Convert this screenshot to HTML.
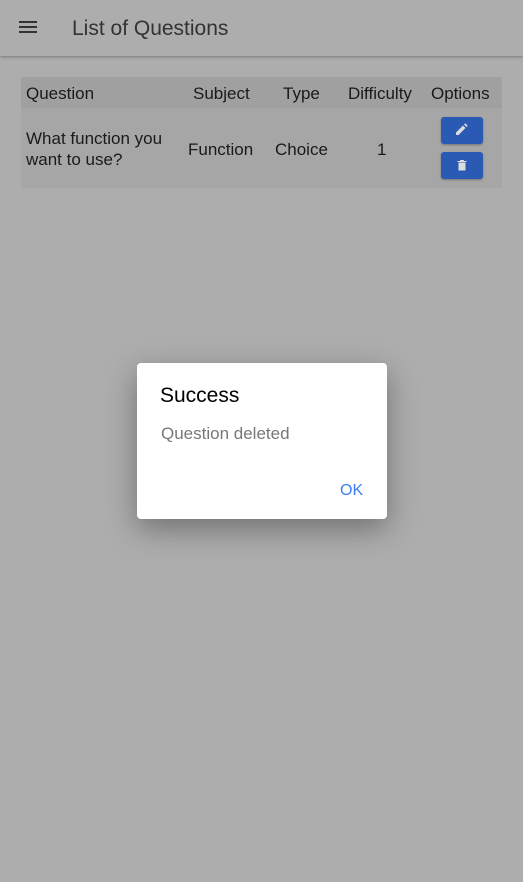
<!DOCTYPE html>
<html><head><style>
body{margin:0;width:523px;height:882px;background:#adadad;font-family:"Liberation Sans",sans-serif;position:relative;overflow:hidden}
.hdr{position:absolute;left:0;top:0;width:523px;height:56px;background:#adadad;box-shadow:0 1px 3px rgba(0,0,0,.3)}
.ham{position:absolute;left:19px;top:21px;width:18px;height:2px;background:#333;box-shadow:0 5px 0 #333,0 10px 0 #333}
.title{position:absolute;left:72px;top:17px;font-size:21px;color:#333}
.tbl{position:absolute;left:21px;top:77px;width:481px;height:111px;background:#a6a6a6}
.th{position:absolute;top:0;left:0;width:481px;height:31px;background:#a0a0a0}
.t{position:absolute;font-size:17px;color:#1a1a1a}
.btn{position:absolute;left:420px;width:42px;height:27px;background:#2a5ab4;border-radius:3px;box-shadow:0 1px 2px rgba(0,0,0,.3)}
.dlg{position:absolute;left:137px;top:363px;width:250px;height:156px;background:#fff;border-radius:4px;box-shadow:0 10px 30px rgba(0,0,0,.35)}
</style></head><body>
<div class="hdr"><div class="ham"></div><div class="title">List of Questions</div></div>
<div class="tbl"><div class="th"></div>
<div class="t" style="left:5px;top:7px">Question</div>
<div class="t" style="left:172px;top:7px">Subject</div>
<div class="t" style="left:262px;top:7px">Type</div>
<div class="t" style="left:327px;top:7px">Difficulty</div>
<div class="t" style="left:410px;top:7px">Options</div>
<div class="t" style="left:5px;top:51px;line-height:21px">What function you<br>want to use?</div>
<div class="t" style="left:167px;top:63px">Function</div>
<div class="t" style="left:254px;top:63px">Choice</div>
<div class="t" style="left:356px;top:63px">1</div>
<div class="btn" style="top:40px"><svg width="42" height="27" viewBox="0 0 42 27"><path d="M15 18v-2.5l7-7 2.5 2.5-7 7zM23 7.5l1.2-1.2 2.5 2.5-1.2 1.2z" fill="#ddd"/></svg></div>
<div class="btn" style="top:75px"><svg width="42" height="27" viewBox="0 0 42 27"><path d="M16.5 9h9v1h-9zM19 8h4v1h-4zM17.5 10.5h7v8h-7z" fill="#ddd"/></svg></div>
</div>
<div class="dlg">
<div style="position:absolute;left:23px;top:21px;font-size:21px;color:#000">Success</div>
<div style="position:absolute;left:24px;top:61px;font-size:17px;color:#777">Question deleted</div>
<div style="position:absolute;left:203px;top:119px;font-size:16px;color:#3a7ff0">OK</div>
</div>
</body></html>
